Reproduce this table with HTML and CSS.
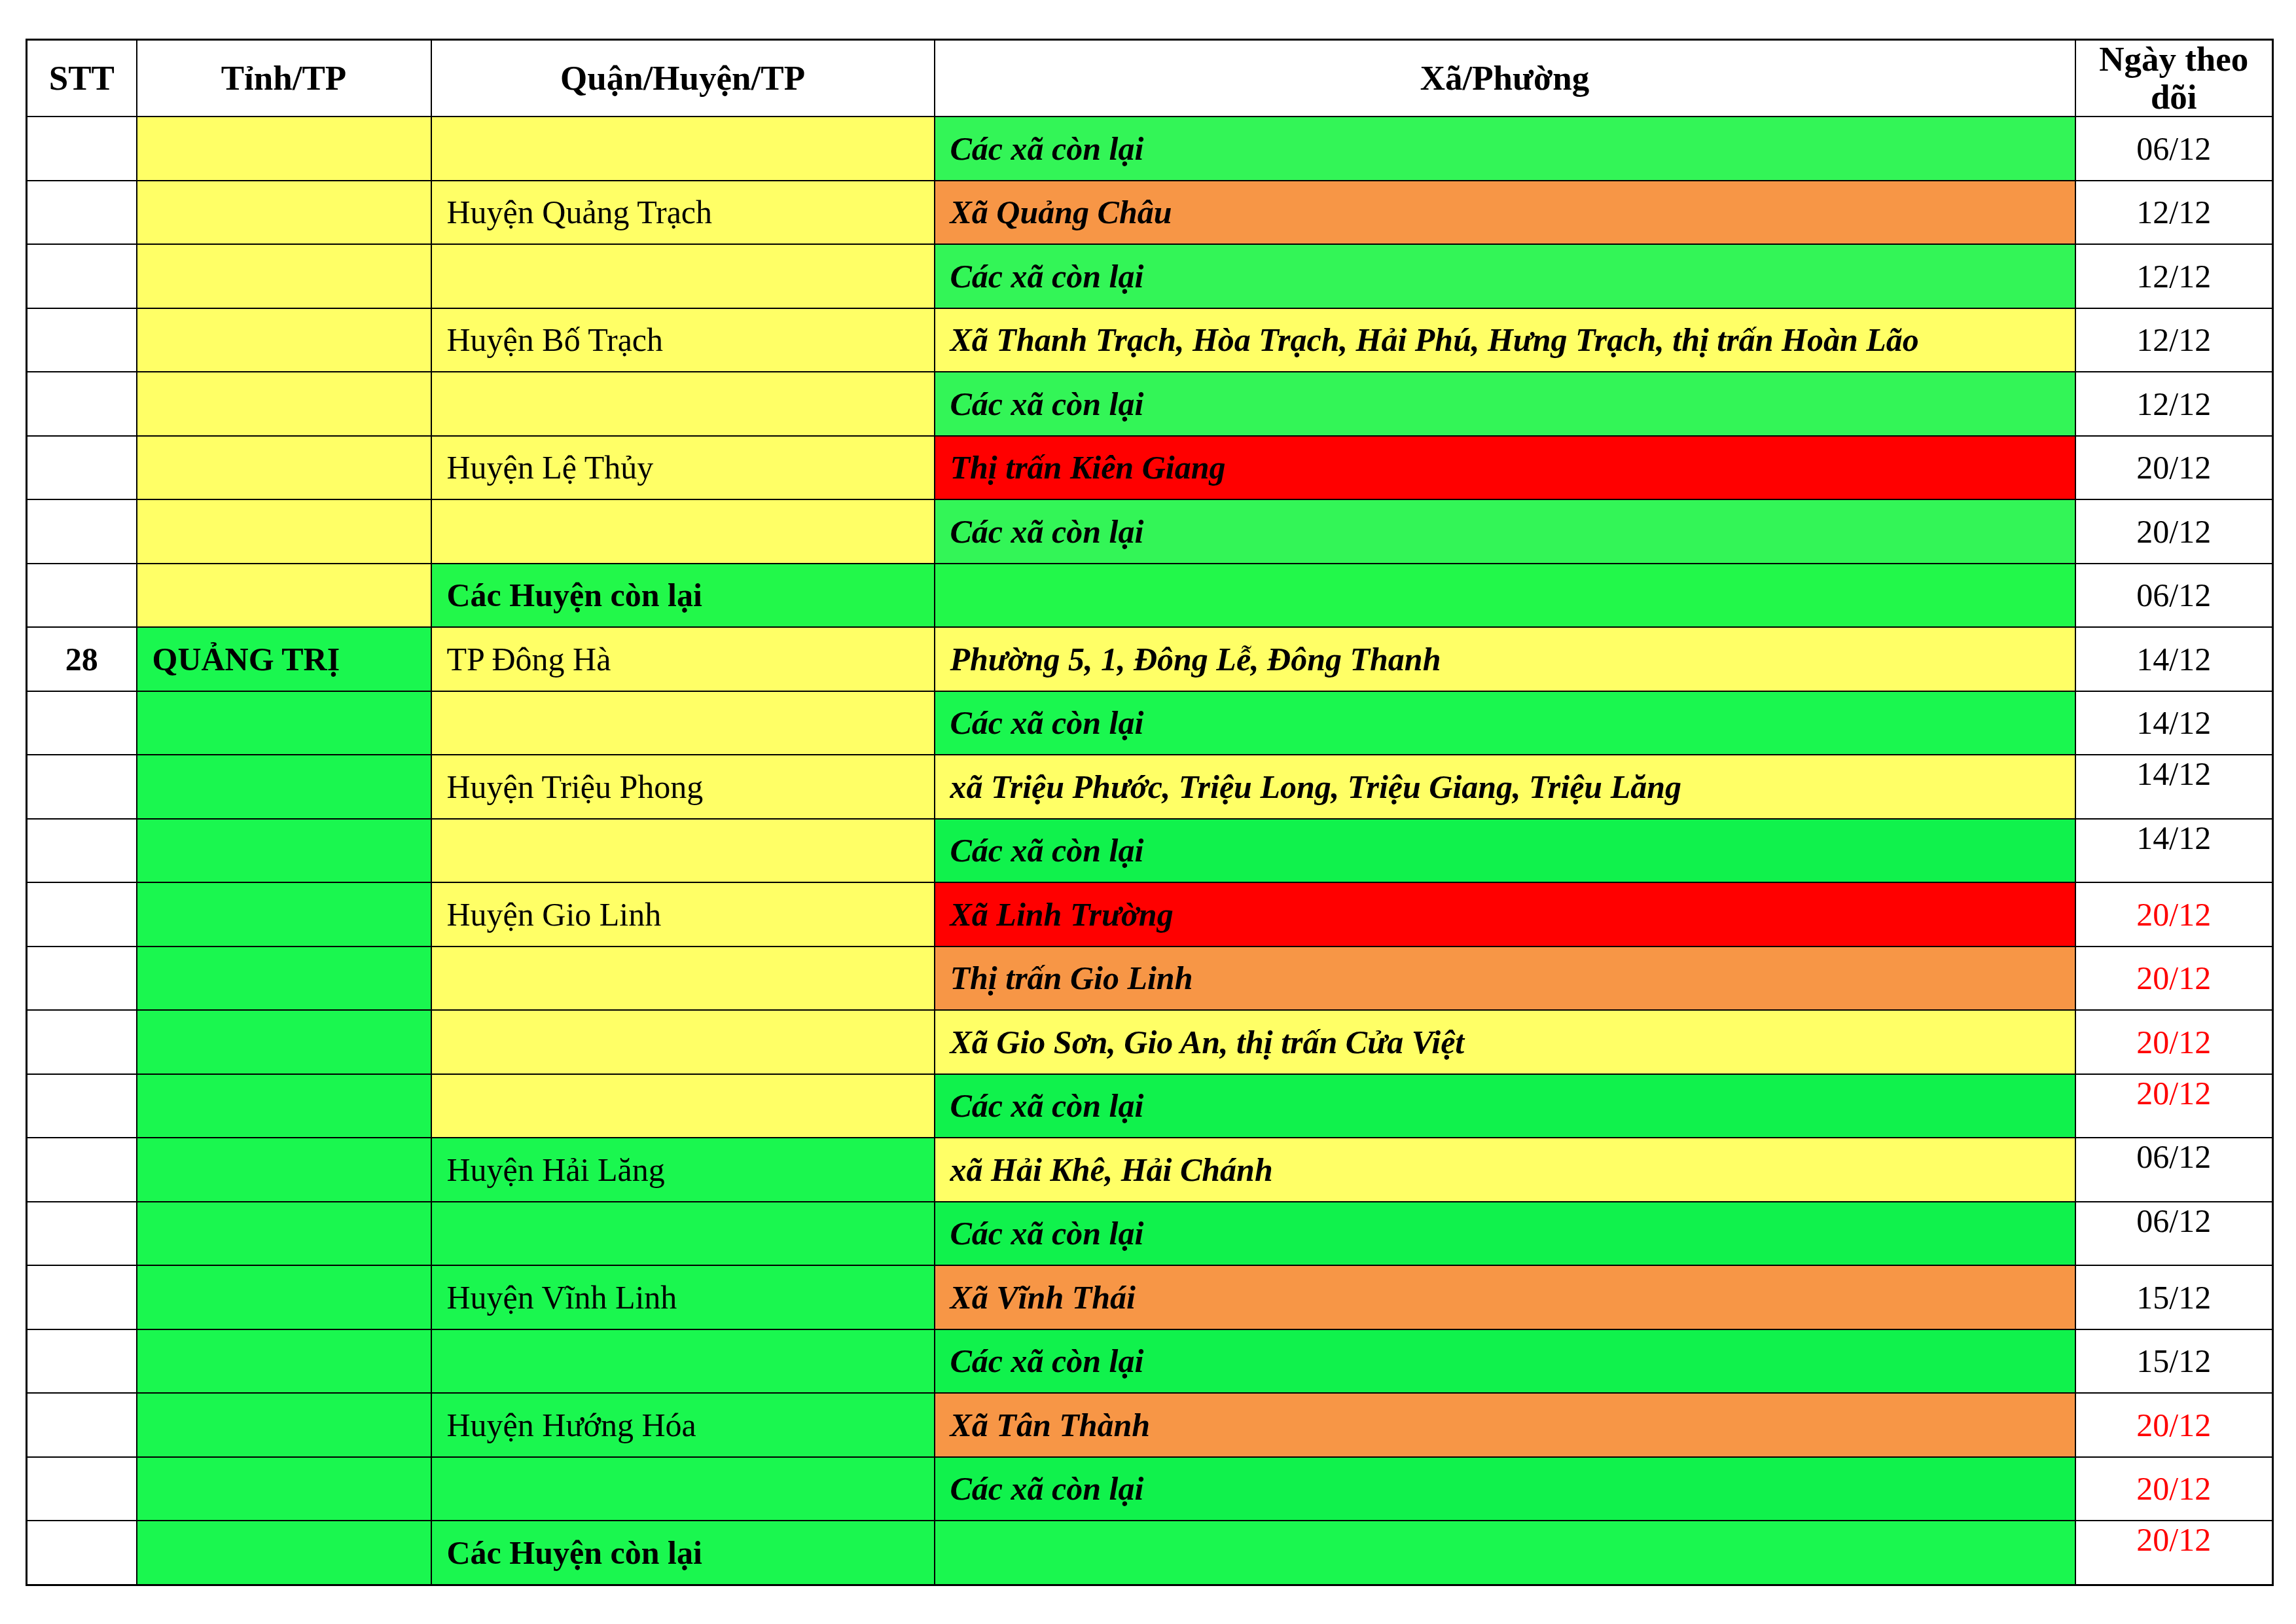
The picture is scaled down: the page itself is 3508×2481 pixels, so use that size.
FILE: index.html
```html
<!DOCTYPE html>
<html lang="vi">
<head>
<meta charset="utf-8">
<title>Bảng theo dõi</title>
<link rel="stylesheet" href="styles.css">
</head>
<body>
<div class="page">
<table class="grid">
  <colgroup>
    <col class="c-stt"><col class="c-tinh"><col class="c-quan"><col class="c-xa"><col class="c-ngay">
  </colgroup>
  <thead>
    <tr class="head">
      <th>STT</th><th>Tỉnh/TP</th><th>Quận/Huyện/TP</th><th>Xã/Phường</th><th>Ngày theo dõi</th>
    </tr>
  </thead>
  <tbody>
    <tr><td></td><td class="y"></td><td class="y"></td><td class="g1 xa">Các xã còn lại</td><td class="d">06/12</td></tr>
    <tr><td></td><td class="y"></td><td class="y t">Huyện Quảng Trạch</td><td class="o xa">Xã Quảng Châu</td><td class="d">12/12</td></tr>
    <tr><td></td><td class="y"></td><td class="y"></td><td class="g1 xa">Các xã còn lại</td><td class="d">12/12</td></tr>
    <tr><td></td><td class="y"></td><td class="y t">Huyện Bố Trạch</td><td class="y xa">Xã Thanh Trạch, Hòa Trạch, Hải Phú, Hưng Trạch, thị trấn Hoàn Lão</td><td class="d">12/12</td></tr>
    <tr><td></td><td class="y"></td><td class="y"></td><td class="g1 xa">Các xã còn lại</td><td class="d">12/12</td></tr>
    <tr><td></td><td class="y"></td><td class="y t">Huyện Lệ Thủy</td><td class="r xa">Thị trấn Kiên Giang</td><td class="d">20/12</td></tr>
    <tr><td></td><td class="y"></td><td class="y"></td><td class="g1 xa">Các xã còn lại</td><td class="d">20/12</td></tr>
    <tr><td></td><td class="y"></td><td class="g2 t b">Các Huyện còn lại</td><td class="g2"></td><td class="d">06/12</td></tr>
    <tr><td class="stt">28</td><td class="g3 t b">QUẢNG TRỊ</td><td class="y t">TP Đông Hà</td><td class="y xa">Phường 5, 1, Đông Lễ, Đông Thanh</td><td class="d">14/12</td></tr>
    <tr><td></td><td class="g3"></td><td class="y"></td><td class="g3 xa">Các xã còn lại</td><td class="d">14/12</td></tr>
    <tr><td></td><td class="g3"></td><td class="y t">Huyện Triệu Phong</td><td class="y xa">xã Triệu Phước, Triệu Long, Triệu Giang, Triệu Lăng</td><td class="d top">14/12</td></tr>
    <tr><td></td><td class="g3"></td><td class="y"></td><td class="g4 xa">Các xã còn lại</td><td class="d top">14/12</td></tr>
    <tr><td></td><td class="g3"></td><td class="y t">Huyện Gio Linh</td><td class="r xa">Xã Linh Trường</td><td class="d red">20/12</td></tr>
    <tr><td></td><td class="g3"></td><td class="y"></td><td class="o xa">Thị trấn Gio Linh</td><td class="d red">20/12</td></tr>
    <tr><td></td><td class="g3"></td><td class="y"></td><td class="y xa">Xã Gio Sơn, Gio An, thị trấn Cửa Việt</td><td class="d red">20/12</td></tr>
    <tr><td></td><td class="g3"></td><td class="y"></td><td class="g4 xa">Các xã còn lại</td><td class="d red top">20/12</td></tr>
    <tr><td></td><td class="g3"></td><td class="g3 t">Huyện Hải Lăng</td><td class="y xa">xã Hải Khê, Hải Chánh</td><td class="d top">06/12</td></tr>
    <tr><td></td><td class="g3"></td><td class="g3"></td><td class="g4 xa">Các xã còn lại</td><td class="d top">06/12</td></tr>
    <tr><td></td><td class="g3"></td><td class="g3 t">Huyện Vĩnh Linh</td><td class="o xa">Xã Vĩnh Thái</td><td class="d">15/12</td></tr>
    <tr><td></td><td class="g3"></td><td class="g3"></td><td class="g4 xa">Các xã còn lại</td><td class="d">15/12</td></tr>
    <tr><td></td><td class="g3"></td><td class="g3 t">Huyện Hướng Hóa</td><td class="o xa">Xã Tân Thành</td><td class="d red">20/12</td></tr>
    <tr><td></td><td class="g3"></td><td class="g3"></td><td class="g4 xa">Các xã còn lại</td><td class="d red">20/12</td></tr>
    <tr><td></td><td class="g3"></td><td class="g3 t b">Các Huyện còn lại</td><td class="g3"></td><td class="d red top">20/12</td></tr>
  </tbody>
</table>
</div>
</body>
</html>
```

FILE: styles.css
```css
html, body {
  margin: 0;
  padding: 0;
  background: #ffffff;
}

.page {
  padding: 59px 0 0 39px;
}

.grid {
  border-collapse: collapse;
  table-layout: fixed;
  width: 3432px;
  border: 3px solid #000;
  font-family: "Liberation Serif", "Times New Roman", serif;
  color: #000;
}

.c-stt { width: 168px; }
.c-tinh { width: 450px; }
.c-quan { width: 769px; }
.c-xa { width: 1743px; }
.c-ngay { width: 302px; }

.grid th,
.grid td {
  border: 2px solid #000;
  padding: 0;
}

.head th {
  height: 115px;
  font-size: 53px;
  font-weight: bold;
  line-height: 1.08;
  text-align: center;
  vertical-align: middle;
  padding: 0 6px;
}

.grid tbody td {
  height: 95.5px;
  font-size: 50px;
  line-height: 1.12;
  vertical-align: middle;
  white-space: nowrap;
}

.t, .xa {
  padding-left: 23px !important;
}

.xa {
  font-weight: bold;
  font-style: italic;
}

.b {
  font-weight: bold;
}

.stt {
  text-align: center;
  font-weight: bold;
}

.d {
  text-align: center;
}

.top {
  vertical-align: top !important;
}

.red {
  color: #ff0000;
}

.y { background: #ffff66; }
.g1 { background: #33f557; }
.g2 { background: #22f84a; }
.g3 { background: #1af74f; }
.g4 { background: #10f24c; }
.o { background: #f79646; }
.r { background: #ff0000; }
```
